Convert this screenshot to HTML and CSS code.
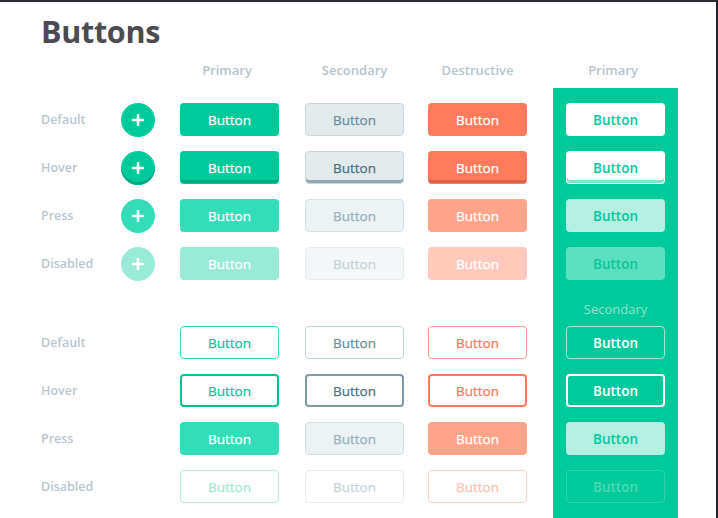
FILE: index.html
```html
<!DOCTYPE html>
<html>
<head>
<meta charset="utf-8">
<link rel="stylesheet" href="styles.css">
</head>
<body>
<div class="frame">
  <h1 class="title">Buttons</h1>
  <div class="board">
    <div class="col labels">
      <div class="head"></div>
      <div class="lbl">Default</div>
      <div class="lbl">Hover</div>
      <div class="lbl">Press</div>
      <div class="lbl">Disabled</div>
      <div class="split"></div>
      <div class="lbl">Default</div>
      <div class="lbl">Hover</div>
      <div class="lbl">Press</div>
      <div class="lbl">Disabled</div>
    </div>
    <div class="col circles">
      <div class="head"></div>
      <div class="circ c-def"><svg viewBox="0 0 12 12" width="12" height="12"><path d="M6 1v10M1 6h10" stroke="#fff" stroke-width="2.6" stroke-linecap="round"/></svg></div>
      <div class="circ c-hov"><svg viewBox="0 0 12 12" width="12" height="12"><path d="M6 1v10M1 6h10" stroke="#fff" stroke-width="2.6" stroke-linecap="round"/></svg></div>
      <div class="circ c-prs"><svg viewBox="0 0 12 12" width="12" height="12"><path d="M6 1v10M1 6h10" stroke="#fff" stroke-width="2.6" stroke-linecap="round"/></svg></div>
      <div class="circ c-dis"><svg viewBox="0 0 12 12" width="12" height="12"><path d="M6 1v10M1 6h10" stroke="#fff" stroke-width="2.6" stroke-linecap="round"/></svg></div>
    </div>
    <div class="col">
      <div class="head head-shift">Primary</div>
      <div class="btn p-def">Button</div>
      <div class="btn p-hov">Button</div>
      <div class="btn p-prs">Button</div>
      <div class="btn p-dis">Button</div>
      <div class="split"></div>
      <div class="btn po-def">Button</div>
      <div class="btn po-hov">Button</div>
      <div class="btn po-prs">Button</div>
      <div class="btn po-dis">Button</div>
    </div>
    <div class="col">
      <div class="head">Secondary</div>
      <div class="btn s-def">Button</div>
      <div class="btn s-hov">Button</div>
      <div class="btn s-prs">Button</div>
      <div class="btn s-dis">Button</div>
      <div class="split"></div>
      <div class="btn so-def">Button</div>
      <div class="btn so-hov">Button</div>
      <div class="btn so-prs">Button</div>
      <div class="btn so-dis">Button</div>
    </div>
    <div class="col">
      <div class="head">Destructive</div>
      <div class="btn d-def">Button</div>
      <div class="btn d-hov">Button</div>
      <div class="btn d-prs">Button</div>
      <div class="btn d-dis">Button</div>
      <div class="split"></div>
      <div class="btn do-def">Button</div>
      <div class="btn do-hov">Button</div>
      <div class="btn do-prs">Button</div>
      <div class="btn do-dis">Button</div>
    </div>
    <div class="col panel-col">
      <div class="head head-shift">Primary</div>
      <div class="panel">
        <div class="btn i-def">Button</div>
        <div class="btn i-hov">Button</div>
        <div class="btn i-prs">Button</div>
        <div class="btn i-dis">Button</div>
        <div class="panel-head">Secondary</div>
        <div class="btn io-def">Button</div>
        <div class="btn io-hov">Button</div>
        <div class="btn io-prs">Button</div>
        <div class="btn io-dis">Button</div>
      </div>
    </div>
  </div>
</div>
</body>
</html>
```

FILE: styles.css
```css
html, body {
  margin: 0;
  padding: 0;
  background: #ffffff;
}
body {
  font-family: "Open Sans", "DejaVu Sans", sans-serif;
}
.frame {
  box-sizing: border-box;
  width: 718px;
  height: 518px;
  border-top: 2px solid #2b2f35;
  border-right: 2px solid #1f2226;
  overflow: hidden;
  padding-left: 41px;
}
.title {
  margin: 0;
  padding-top: 11px;
  height: 46px;
  box-sizing: border-box;
  font-size: 30.5px;
  line-height: 36px;
  font-weight: 700;
  color: #4b4b50;
  letter-spacing: -0.3px;
}
.board {
  display: flex;
  align-items: flex-start;
}
.col {
  display: flex;
  flex-direction: column;
  gap: 15px;
}
.col .head {
  height: 20px;
  line-height: 20px;
  margin-top: 12px;
  margin-bottom: 8px;
  font-size: 13px;
  font-weight: 600;
  color: #b6c4cc;
  text-align: center;
}
.col .head-shift { padding-right: 5px; }
.labels { width: 80px; }
.circles { width: 34px; margin-right: 25px; }
.col:nth-child(3) { margin-right: 26px; }
.col:nth-child(4) { margin-right: 24px; }
.col:nth-child(5) { margin-right: 26px; }
.lbl {
  height: 33px;
  line-height: 33px;
  font-size: 12.5px;
  font-weight: 600;
  color: #b9c6ce;
}
.split { height: 16px; }
.circ {
  width: 34px;
  height: 34px;
  border-radius: 50%;
  display: flex;
  align-items: center;
  justify-content: center;
  box-sizing: border-box;
  margin-bottom: -1px;
}
.c-def { background: #00c99b; }
.c-hov { background: #00c99b; box-shadow: inset 0 -3px 0 #00a882; }
.c-prs { background: #34dcb8; }
.c-dis { background: #99ead7; }

.btn {
  box-sizing: border-box;
  width: 99px;
  height: 33px;
  border-radius: 4px;
  display: flex;
  align-items: center;
  justify-content: center;
  font-size: 13.5px;
  font-weight: 400;
  -webkit-text-stroke: 0.25px currentColor;
  border: 1px solid transparent;
  color: #ffffff;
}
.p-def { background: #00c99b; }
.p-hov { background: #00c99b; box-shadow: inset 0 -3px 0 #00a882; }
.p-prs { background: #34dcb8; }
.p-dis { background: #99ead7; }

.s-def { background: #e3eaec; border-color: #c8d6db; color: #6a8f9c; }
.s-hov { background: #e3eaec; border-color: #c8d6db; color: #4b7282; box-shadow: inset 0 -3px 0 #91aab3; }
.s-prs { background: #edf2f4; border-color: #d5e0e4; color: #98b1ba; }
.s-dis { background: #f4f7f8; border-color: #e6ecee; color: #c4d2d7; }

.d-def { background: #ff7b5c; }
.d-hov { background: #ff7b5c; box-shadow: inset 0 -3px 0 #d9604a; }
.d-prs { background: #ffa48b; }
.d-dis { background: #ffcabb; }

.po-def { background: #fff; border-color: #3fd8b5; color: #00c99b; }
.po-hov { background: #fff; border: 2px solid #00c193; color: #00c99b; }
.po-prs { background: #34dcb8; }
.po-dis { background: #fff; border-color: #b3f1e1; color: #9fe9d5; }

.so-def { background: #fff; border-color: #c3d4da; color: #6a8f9c; }
.so-hov { background: #fff; border: 2px solid #7a9aa5; color: #4b7282; }
.so-prs { background: #edf2f4; border-color: #d5e0e4; color: #98b1ba; }
.so-dis { background: #fff; border-color: #e5ecef; color: #c8d6db; }

.do-def { background: #fff; border-color: #ff9d83; color: #ff7b5c; }
.do-hov { background: #fff; border: 2px solid #ff7b5c; color: #ff7b5c; }
.do-prs { background: #ffa48b; }
.do-dis { background: #fff; border-color: #ffd3c6; color: #ffc3b3; }

.panel-col { gap: 0; }
.panel-col .head { margin-bottom: 8px; }
.panel {
  width: 125px;
  height: 500px;
  box-sizing: border-box;
  background: #00c99b;
  padding: 15px 13px 0;
  display: flex;
  flex-direction: column;
  gap: 15px;
}
.panel .btn { font-weight: 600; -webkit-text-stroke: 0; }
.panel-head {
  height: 20px;
  line-height: 20px;
  margin: 4px 0 -8px;
  text-align: center;
  font-size: 13px;
  font-weight: 500;
  color: #8ae6cf;
}
.i-def { background: #fff; color: #00c99b; }
.i-hov { background: #fff; color: #00c99b; box-shadow: inset 0 -3px 0 #80e4cd; }
.i-prs { background: #b3f0e1; color: #00c99b; }
.i-dis { background: #5ce0c0; color: #0fc597; }

.io-def { border-color: rgba(255,255,255,0.6); color: #fff; }
.io-hov { border: 2px solid #ffffff; color: #fff; }
.io-prs { background: #b3f0e1; color: #00c99b; }
.io-dis { border-color: rgba(255,255,255,0.18); color: rgba(255,255,255,0.3); }
```
